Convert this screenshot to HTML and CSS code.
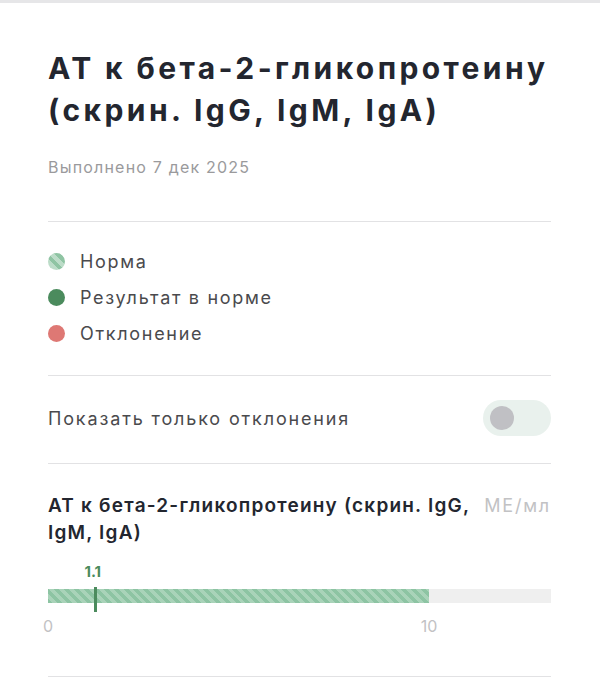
FILE: index.html
```html
<!DOCTYPE html>
<html lang="ru">
<head>
<meta charset="utf-8">
<link rel="stylesheet" href="styles.css">
</head>
<body>
<div class="topline"></div>
<main class="page">
  <header class="head">
    <h1 class="title">АТ к бета-2-гликопротеину (скрин. IgG, IgM, IgA)</h1>
    <div class="date">Выполнено 7 дек 2025</div>
  </header>
  <ul class="legend">
    <li class="legend-item"><span class="dot dot-norm"></span>Норма</li>
    <li class="legend-item"><span class="dot dot-ok"></span>Результат в норме</li>
    <li class="legend-item"><span class="dot dot-bad"></span>Отклонение</li>
  </ul>
  <div class="filter">
    <span class="filter-label">Показать только отклонения</span>
    <span class="switch"><span class="knob"></span></span>
  </div>
  <section class="metric">
    <div class="metric-head">
      <div class="metric-name">АТ к бета-2-гликопротеину (скрин. IgG, IgM, IgA)</div>
      <div class="metric-unit">МЕ/мл</div>
    </div>
    <div class="chart">
      <div class="value-row"><span class="value" style="left: 8.9%">1.1</span></div>
      <div class="track">
        <div class="range" style="width: 75.75%"></div>
        <div class="marker" style="left: 8.9%"></div>
      </div>
      <div class="scale">
        <span class="tick" style="left: 0%">0</span>
        <span class="tick" style="left: 75.75%">10</span>
      </div>
    </div>
  </section>
</main>
</body>
</html>
```

FILE: styles.css
```css
* { box-sizing: border-box; }
html, body { margin: 0; padding: 0; background: #ffffff; }
body {
  font-family: Inter, "Noto Sans", "DejaVu Sans", sans-serif;
  color: #23262f;
}
.topline { height: 3px; background: #e6e6e8; }
.page { padding: 0 49px 0 48px; }
.head {
  padding-top: 44px;
  padding-bottom: 43px;
  border-bottom: 1px solid #e2e2e4;
}
.title {
  margin: 0;
  font-size: 30px;
  line-height: 42px;
  font-weight: 700;
  letter-spacing: 3.4px;
  color: #23262f;
}
.date {
  margin-top: 25px;
  font-size: 16px;
  line-height: 22px;
  letter-spacing: 1.2px;
  color: #9a9a9c;
}
.legend {
  list-style: none;
  margin: 0;
  padding: 21px 0 24px;
  border-bottom: 1px solid #e2e2e4;
}
.legend-item {
  display: flex;
  align-items: center;
  gap: 15px;
  height: 36px;
  font-size: 18px;
  letter-spacing: 1.7px;
  color: #4a4a4d;
}
.dot {
  width: 17px;
  height: 17px;
  border-radius: 50%;
  flex: none;
}
.dot-norm {
  background: repeating-linear-gradient(45deg, #8fc4a3 0 4px, #bcdcc8 4px 8px);
}
.dot-ok { background: #4b8b5d; }
.dot-bad { background: #de7874; }
.filter {
  display: flex;
  align-items: center;
  justify-content: space-between;
  height: 88px;
  padding-bottom: 3px;
  border-bottom: 1px solid #e2e2e4;
}
.filter-label {
  font-size: 18px;
  letter-spacing: 1.85px;
  color: #4a4a4d;
}
.switch {
  width: 68px;
  height: 36px;
  border-radius: 18px;
  background: #e9f1ed;
  display: flex;
  align-items: center;
  padding-left: 7px;
}
.knob {
  width: 24px;
  height: 24px;
  border-radius: 50%;
  background: #c0c0c4;
}
.metric {
  padding-top: 28px;
  padding-bottom: 30px;
  border-bottom: 1px solid #e2e2e4;
}
.metric-head {
  display: flex;
  gap: 10px;
  align-items: flex-start;
}
.metric-name {
  flex: 1;
  font-size: 19px;
  line-height: 27px;
  font-weight: 600;
  letter-spacing: 1.2px;
  color: #23262f;
}
.metric-unit {
  font-size: 18px;
  line-height: 27px;
  letter-spacing: 1.8px;
  color: #c2c2c4;
  white-space: nowrap;
}
.chart { margin-top: 17px; }
.value-row {
  position: relative;
  height: 20px;
}
.value {
  position: absolute;
  top: 0;
  transform: translateX(-50%);
  font-size: 15px;
  line-height: 18px;
  font-weight: 700;
  color: #4b8b5d;
}
.track {
  position: relative;
  height: 14px;
  margin-top: 6px;
  background: #efefef;
}
.range {
  height: 100%;
  background: repeating-linear-gradient(45deg, #8dc4a3 0 3.5px, #a9d3b9 3.5px 7px);
}
.marker {
  position: absolute;
  top: -2px;
  width: 3px;
  height: 25px;
  margin-left: 1px;
  background: #4b8b5d;
}
.scale {
  position: relative;
  height: 30px;
  margin-top: 13px;
}
.tick {
  position: absolute;
  top: 0;
  transform: translateX(-50%);
  font-size: 16px;
  line-height: 20px;
  color: #c2c2c4;
}
```
